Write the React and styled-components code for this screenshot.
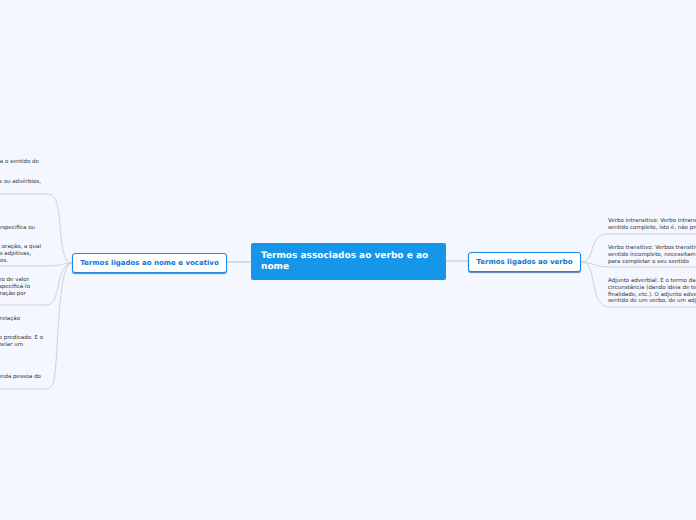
import React from "react";
import styled, { createGlobalStyle } from "styled-components";

const Global = createGlobalStyle`
  html, body {
    margin: 0;
    padding: 0;
    background: #f4f7ff;
    overflow: hidden;
  }
`;

const leftNotes = [
  { top: 159, lines: [{ end: 39, text: "Complemento nominal: completa o sentido de" }] },
  { top: 179, lines: [{ end: 41, text: "Adjunto: modifica substantivos ou advérbios," }] },
  { top: 225, lines: [{ end: 35, text: "Aposto: termo que especifica ou" }] },
  {
    top: 244,
    lines: [
      { end: 41, text: "Adjunto adnominal: termo da oração, a qual" },
      { end: 31, text: "pode ser locuções adjetivas," },
      { end: 8, text: "pronomes e artigos." },
    ],
  },
  {
    top: 277,
    lines: [
      { end: 29, text: "Aposto: é um termo de valor" },
      { end: 30, text: "que busca especificá-lo" },
      { end: 26, text: "ou explicar a oração por" },
    ],
  },
  { top: 316, lines: [{ end: 20, text: "Termos em relação" }] },
  {
    top: 335,
    lines: [
      { end: 43, text: "Vocativo: não faz parte do sujeito nem do predicado. É o" },
      { end: 23, text: "termo usado para interpelar um" },
    ],
  },
  { top: 374, lines: [{ end: 41, text: "Usado para chamar a segunda pessoa do" }] },
];

const rightNotes = [
  {
    top: 218,
    lines: [
      "Verbo intransitivo: Verbo intransitivo é aquele que tem",
      "sentido completo, isto é, não precisa de complemento",
    ],
  },
  {
    top: 245,
    lines: [
      "Verbo transitivo: Verbos transitivos são os que têm",
      "sentido incompleto, necessitam de um complemento",
      "para completar o seu sentido",
    ],
  },
  {
    top: 278,
    lines: [
      "Adjunto adverbial: É o termo da oração que indica uma",
      "circunstância (dando ideia de tempo, lugar, modo,",
      "finalidade, etc.). O adjunto adverbial modifica o",
      "sentido de um verbo, de um adjetivo ou de um advérbio",
    ],
  },
];

const App = () => {
  return (
    <>
      <Global />
      <Canvas>
        <Branches viewBox="0 0 696 520">
          <Trunk d="M227 262 L251 262" />
          <Trunk d="M446 261 L468 261" />
          <path d="M72 263 C64 262 62 250 60 225 C58 203 56 194 47 194 L0 194" />
          <path d="M72 263 C64 263 60 266 47 266 L0 266" />
          <path d="M72 263 C64 264 61 272 58 287 C55 300 53 305 46 305 L0 305" />
          <path d="M72 263 C64 264 61 285 58 330 C55 375 56 389 46 389 L0 389" />
          <path d="M581 262 C592 262 590 250 595 242 C598 236 602 234 609 234 L696 234" />
          <path d="M581 262 C592 262 595 267 609 267 L696 267" />
          <path d="M581 262 C592 262 591 275 595 290 C598 302 602 307 609 307 L696 307" />
        </Branches>

        {leftNotes.map((note) => (
          <LeftNote key={note.top} $top={note.top}>
            {note.lines.map((line) => (
              <LeftLine key={line.text} $end={line.end}>
                <span>{line.text}</span>
              </LeftLine>
            ))}
          </LeftNote>
        ))}

        {rightNotes.map((note) => (
          <RightNote key={note.top} $top={note.top}>
            {note.lines.map((line) => (
              <div key={line}>{line}</div>
            ))}
          </RightNote>
        ))}

        <CentralNode>Termos associados ao verbo e ao nome</CentralNode>
        <TopicNode $left={72} $top={253} $width={155}>
          Termos ligados ao nome e vocativo
        </TopicNode>
        <TopicNode $left={468} $top={252} $width={113}>
          Termos ligados ao verbo
        </TopicNode>
      </Canvas>
    </>
  );
};

const Canvas = styled.div`
  position: relative;
  width: 696px;
  height: 520px;
  overflow: hidden;
  background: #f4f7ff;
  font-family: "DejaVu Sans", Verdana, sans-serif;
  text-rendering: geometricPrecision;
`;

const Branches = styled.svg`
  position: absolute;
  left: 0;
  top: 0;
  width: 696px;
  height: 520px;

  path {
    fill: none;
    stroke: #cfd1d8;
    stroke-width: 1;
  }
`;

const Trunk = styled.path`
  && {
    stroke: #bfc1c6;
  }
`;

const CentralNode = styled.div`
  position: absolute;
  left: 251px;
  top: 243px;
  width: 195px;
  height: 37px;
  box-sizing: border-box;
  padding: 8px 10px;
  border-radius: 2px;
  background: #1696e8;
  color: #ffffff;
  font-size: 9px;
  font-weight: 700;
  line-height: 11px;
`;

const TopicNode = styled.div`
  position: absolute;
  left: ${(p) => p.$left}px;
  top: ${(p) => p.$top}px;
  width: ${(p) => p.$width}px;
  height: 20px;
  box-sizing: border-box;
  display: flex;
  align-items: center;
  justify-content: center;
  border: 1px solid #1b87e6;
  border-radius: 3px;
  background: #ffffff;
  box-shadow: 0 1px 1px rgba(20, 80, 150, 0.7);
  color: #0f73d8;
  font-size: 7px;
  font-weight: 700;
  white-space: nowrap;
`;

const LeftNote = styled.div`
  position: absolute;
  left: 0;
  top: ${(p) => p.$top}px;
  color: #33353b;
  font-size: 5.5px;
  line-height: 6.8px;
`;

const LeftLine = styled.div`
  display: flex;
  justify-content: flex-end;
  width: ${(p) => p.$end}px;
  white-space: nowrap;

  span {
    flex: none;
  }
`;

const RightNote = styled.div`
  position: absolute;
  left: 608px;
  top: ${(p) => p.$top}px;
  color: #33353b;
  font-size: 5.5px;
  line-height: 6.8px;
  white-space: nowrap;
`;

export default App;
